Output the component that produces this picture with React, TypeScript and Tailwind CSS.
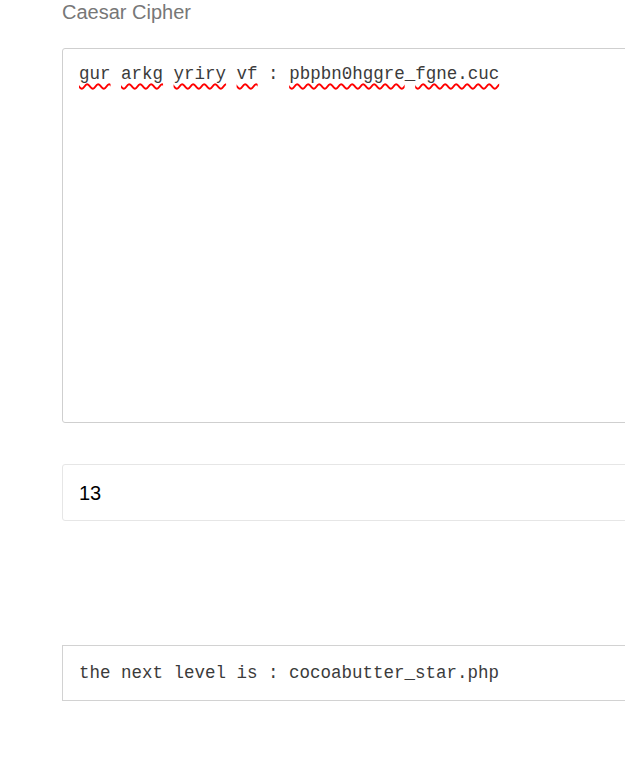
import React from "react";

const mono = "font-['Liberation_Mono',monospace]";

const Squiggle = ({ children }: { children: React.ReactNode }) => (
  <span className="underline decoration-wavy decoration-[#ff0000] decoration-[1.5px] underline-offset-[4px]">
    {children}
  </span>
);

export default function App() {
  return (
    <div className="w-full h-[774px] overflow-hidden bg-white">
      <div className="pl-[62px] w-[760px]">
        <h1 className="text-[20px] leading-[24px] text-[#777] font-['Liberation_Sans',Arial,sans-serif]">
          Caesar Cipher
        </h1>

        <div
          className={`mt-[24px] h-[375px] border border-[#cfcfcf] rounded-[3px] px-[16px] pt-[11px] text-[17.5px] leading-[28px] text-[#3b3b3b] ${mono}`}
        >
          <Squiggle>gur</Squiggle> <Squiggle>arkg</Squiggle> <Squiggle>yriry</Squiggle>{" "}
          <Squiggle>vf</Squiggle> : <Squiggle>pbpbn0hggre</Squiggle>_<Squiggle>fgne.cuc</Squiggle>
        </div>

        <div className="mt-[41px] h-[57px] border border-[#e6e6e6] rounded-[3px] px-[16px] flex items-center text-[20px] text-black font-['Liberation_Sans',Arial,sans-serif]">
          13
        </div>

        <div
          className={`mt-[124px] h-[56px] border border-[#d2d2d2] px-[16px] flex items-center text-[17.5px] text-[#3b3b3b] ${mono}`}
        >
          the next level is : cocoabutter_star.php
        </div>
      </div>
    </div>
  );
}
